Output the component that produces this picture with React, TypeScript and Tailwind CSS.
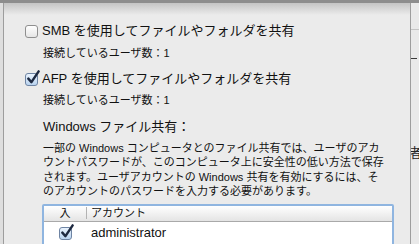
import React from "react";

// Aqua style checkbox (13x13) with optional check mark that overshoots the box
function AquaCheck({ checked }: { checked?: boolean }) {
  return (
    <div className="relative w-[13px] h-[13px] shrink-0">
      <div
        className={
          checked
            ? "w-full h-full rounded-[3px] border border-[#6e84a3] bg-gradient-to-b from-[#eaf3fd] to-[#b9d3ef]"
            : "w-full h-full rounded-[3px] border border-[#8f8f8f] bg-gradient-to-b from-[#ffffff] to-[#e6e6e6]"
        }
      />
      {checked && (
        <svg
          viewBox="0 0 16 16"
          className="absolute left-[1px] top-[-3px] w-[15px] h-[15px]"
        >
          <path
            d="M2.5 9.2 L5.8 13 L13.5 1.5"
            fill="none"
            stroke="#1d2940"
            strokeWidth="2.6"
            strokeLinecap="round"
            strokeLinejoin="round"
          />
        </svg>
      )}
    </div>
  );
}

const font = "font-['Liberation_Sans','Noto_Sans_CJK_JP',sans-serif]";

export default function App() {
  return (
    <div className={`w-[419px] h-[244px] overflow-hidden flex flex-col bg-[#e6e6e6] text-[#111] ${font}`}>
      {/* toolbar edge of the parent window */}
      <div className="h-[3px] shrink-0 bg-[#8d8d8d]" />

      <div className="flex flex-1 min-h-0">
        {/* parent window, left side */}
        <div className="w-[3px] shrink-0 bg-[#dedede]" />

        {/* sheet */}
        <div className="relative w-[408px] shrink-0 border-l border-r border-[#9d9d9d] bg-[#ebebeb] pl-[21px]">
          {/* top shadow of the sheet */}
          <div className="pointer-events-none absolute inset-x-0 top-0 h-[12px] bg-gradient-to-b from-[#c4c4c4] to-[#ebebeb]/0" />

          <div className="relative flex flex-col">
            <div className="mt-[20px] h-[16px] flex items-center gap-[4px] text-[13px]">
              <AquaCheck />
              <span>SMB を使用してファイルやフォルダを共有</span>
            </div>
            <div className="mt-[7px] ml-[18px] h-[14px] leading-[14px] text-[11px]">
              接続しているユーザ数：1
            </div>

            <div className="mt-[11px] h-[16px] flex items-center gap-[4px] text-[13px]">
              <AquaCheck checked />
              <span>AFP を使用してファイルやフォルダを共有</span>
            </div>
            <div className="mt-[6px] ml-[18px] h-[14px] leading-[14px] text-[11px]">
              接続しているユーザ数：1
            </div>

            <div className="mt-[12px] ml-[18px] h-[16px] leading-[16px] text-[13px]">
              Windows ファイル共有：
            </div>
            <p className="mt-[6px] ml-[18px] w-[345px] text-[11px] leading-[14.4px] whitespace-nowrap">
              一部の Windows コンピュータとのファイル共有では、ユーザのアカ
              <br />
              ウントパスワードが、このコンピュータ上に安全性の低い方法で保存
              <br />
              されます。ユーザアカウントの Windows 共有を有効にするには、そ
              <br />
              のアカウントのパスワードを入力する必要があります。
            </p>

            {/* accounts table with focus ring */}
            <div className="mt-[5px] ml-[17px] w-[352px] h-[60px] rounded-[2px] border-2 border-[#8fb5e0] bg-white">
              <div className="flex h-[16px] items-center border-b border-[#a9a9a9] bg-gradient-to-b from-[#ffffff] to-[#e4e4e4] text-[11px]">
                <div className="w-[43px] text-center border-r border-[#b3b3b3] leading-[12px]">入</div>
                <div className="pl-[4px]">アカウント</div>
              </div>
              <div className="flex h-[22px] items-center text-[13px]">
                <div className="w-[43px] flex justify-center pt-[1px]">
                  <AquaCheck checked />
                </div>
                <div className="pl-[4px]">administrator</div>
              </div>
            </div>
          </div>
        </div>

        {/* parent window, right side */}
        <div className="flex-1 flex flex-col bg-[#e9e9e9]">
          <div className="mt-[26px] h-px bg-[#c4c4c4]" />
          <div className="mt-[28px] h-px w-[6px] bg-[#3a3a3a]" />
          <div className="mt-[87px] text-[13px] leading-[14px] text-[#222] -ml-[2px]">者</div>
        </div>
      </div>
    </div>
  );
}
